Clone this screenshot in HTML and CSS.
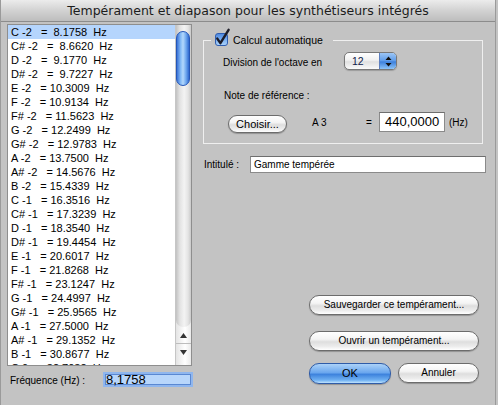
FILE: index.html
```html
<!DOCTYPE html>
<html lang="fr">
<head>
    <meta charset="UTF-8">
    <title>Tempérament et diapason</title>
    <link rel="stylesheet" href="styles.css">
</head>
<body>
<div class="window">
    <div class="titlebar">Tempérament et diapason pour les synthétiseurs intégrés</div>
    <div class="content">
        <div class="left">
            <div class="listbox">
                <div class="list">
                    <div class="row sel">C -2   =  8.1758  Hz</div>
                    <div class="row">C# -2   =  8.6620  Hz</div>
                    <div class="row">D -2   =  9.1770  Hz</div>
                    <div class="row">D# -2   =  9.7227  Hz</div>
                    <div class="row">E -2   = 10.3009  Hz</div>
                    <div class="row">F -2   = 10.9134  Hz</div>
                    <div class="row">F# -2   = 11.5623  Hz</div>
                    <div class="row">G -2   = 12.2499  Hz</div>
                    <div class="row">G# -2   = 12.9783  Hz</div>
                    <div class="row">A -2   = 13.7500  Hz</div>
                    <div class="row">A# -2   = 14.5676  Hz</div>
                    <div class="row">B -2   = 15.4339  Hz</div>
                    <div class="row">C -1   = 16.3516  Hz</div>
                    <div class="row">C# -1   = 17.3239  Hz</div>
                    <div class="row">D -1   = 18.3540  Hz</div>
                    <div class="row">D# -1   = 19.4454  Hz</div>
                    <div class="row">E -1   = 20.6017  Hz</div>
                    <div class="row">F -1   = 21.8268  Hz</div>
                    <div class="row">F# -1   = 23.1247  Hz</div>
                    <div class="row">G -1   = 24.4997  Hz</div>
                    <div class="row">G# -1   = 25.9565  Hz</div>
                    <div class="row">A -1   = 27.5000  Hz</div>
                    <div class="row">A# -1   = 29.1352  Hz</div>
                    <div class="row">B -1   = 30.8677  Hz</div>
                    <div class="row">C 0   = 32.7032  Hz</div>
                </div>
                <div class="scrollbar">
                    <div class="track"><div class="thumb"></div></div>
                    <div class="arrow">
                        <svg width="7" height="5" viewBox="0 0 7 5"><path d="M0 5 L3.5 0 L7 5 Z" fill="#333"/></svg>
                    </div>
                    <div class="arrow down">
                        <svg width="7" height="5" viewBox="0 0 7 5"><path d="M0 0 L3.5 5 L7 0 Z" fill="#333"/></svg>
                    </div>
                </div>
            </div>
            <div class="freq-row">
                <span class="freq-label">Fréquence (Hz) :</span>
                <span class="field focus">8,1758</span>
            </div>
        </div>

        <div class="right">
            <fieldset class="group">
                <legend>
                    <span class="check">
                        <svg class="tick" width="13" height="13" viewBox="0 0 13 13"><path d="M2.3 5.6 L5.4 10.2 L13.6 -3.2" fill="none" stroke="#1c1c28" stroke-width="2.4" stroke-linecap="round" stroke-linejoin="round"/></svg>
                    </span><span class="legend-text">Calcul automatique</span>
                </legend>
                <div class="gbody">
                    <div class="opt-row">
                        <span class="opt-label">Division de l'octave en</span>
                        <div class="popup">
                            <span class="popup-value">12</span>
                            <span class="popup-arrows">
                                <svg width="7" height="11" viewBox="0 0 7 11"><path d="M0.5 4 L3.5 0.5 L6.5 4 Z M0.5 7 L3.5 10.5 L6.5 7 Z" fill="#111"/></svg>
                            </span>
                        </div>
                    </div>
                    <div class="note-row">Note de référence :</div>
                    <div class="ref-row">
                        <span class="btn btn-choose">Choisir...</span>
                        <span class="ref-note">A 3</span>
                        <span class="ref-eq">=</span>
                        <span class="num-field">440,0000</span>
                        <span class="ref-unit">(Hz)</span>
                    </div>
                </div>
            </fieldset>

            <div class="name-row">
                <span class="name-label">Intitulé :</span>
                <span class="name-field">Gamme tempérée</span>
            </div>

            <div class="actions">
                <span class="btn btn-wide">Sauvegarder ce tempérament...</span>
                <span class="btn btn-wide btn-open">Ouvrir un tempérament...</span>
                <div class="btn-row">
                    <span class="btn btn-ok">OK</span>
                    <span class="btn btn-cancel">Annuler</span>
                </div>
            </div>
        </div>
    </div>
</div>
</body>
</html>
```

FILE: styles.css
```css
body {
    margin: 0;
    background-color: #c3c3c3;
    font-family: "Liberation Sans", Arial, sans-serif;
    font-size: 10px;
    color: #000;
}
.window {
    width: 496px;
    height: 405px;
    box-sizing: border-box;
    border-left: 1px solid #9a9a9a;
    border-right: 1px solid #9a9a9a;
    background-color: #c3c3c3;
    overflow: hidden;
}
.titlebar {
    height: 22px;
    box-sizing: border-box;
    border-bottom: 1px solid #8c8c8c;
    background: linear-gradient(#ececec, #d2d2d2 50%, #bdbdbd);
    font-family: "DejaVu Sans", sans-serif;
    font-size: 12.5px;
    line-height: 21px;
    text-align: center;
    color: #1c1c1c;
}
.content {
    display: flex;
    padding: 2px 0 0 6px;
}

/* liste des notes */
.left {
    width: 186px;
}
.listbox {
    display: flex;
    width: 185px;
    height: 342px;
    box-sizing: border-box;
    border: 1px solid #8e8e8e;
    background-color: #fff;
}
.list {
    width: 167px;
    overflow: hidden;
    font-size: 11px;
}
.row {
    height: 14px;
    line-height: 14px;
    padding-left: 3px;
    white-space: pre;
}
.sel {
    background-color: #b5d5fd;
}
.scrollbar {
    width: 16px;
    box-sizing: border-box;
    border-left: 1px solid #c6c6c6;
    background: linear-gradient(to right, #e4e4e4, #f8f8f8 45%, #fff 60%, #eaeaea);
}
.track {
    height: 302px;
    box-sizing: border-box;
    padding-top: 6px;
    border-radius: 0 0 7px 7px;
    background: linear-gradient(to right, #c2c2c2, #e2e2e2 25%, #f3f3f3 55%, #e4e4e4 80%, #c9c9c9);
}
.thumb {
    width: 14px;
    height: 55px;
    box-sizing: border-box;
    border: 1px solid #2557b8;
    border-radius: 7px;
    background: linear-gradient(to right, #3a72d6, #84baf5 30%, #b3d8fc 50%, #6fa8ef 75%, #2f68cf);
}
.arrow {
    height: 16px;
    display: flex;
    align-items: center;
    justify-content: center;
}
.arrow.down {
    border-top: 1px solid #bdbdbd;
}
.freq-row {
    display: flex;
    align-items: center;
    justify-content: space-between;
    margin-top: 6px;
}
.freq-label {
    padding: 2px 0 0 3px;
}
.field {
    width: 90px;
    height: 15px;
    box-sizing: border-box;
    font-size: 13px;
    line-height: 11px;
    padding-left: 1px;
}
.focus {
    border: 2px solid #8fb6ee;
    box-shadow: inset 0 0 0 1px #5a88d2;
    background-color: #b8d6fb;
}

/* partie droite */
.right {
    width: 283px;
    margin-left: 10px;
    display: flex;
    flex-direction: column;
}
.group {
    margin: 8px 0 0;
    padding: 0;
    width: 280px;
    min-width: 0;
    box-sizing: border-box;
    border: 1px solid #efefef;
}
.group legend {
    margin-left: 7px;
    padding: 0 10px 0 4px;
    height: 16px;
    line-height: 16px;
}
.check {
    display: inline-block;
    position: relative;
    width: 13px;
    height: 13px;
    box-sizing: border-box;
    margin-right: 5px;
    vertical-align: -2px;
    border: 1px solid #2f5db0;
    border-radius: 3px;
    background: linear-gradient(#4f8ae0, #79aef0 50%, #a9d1fa);
}
.tick {
    position: absolute;
    left: -1px;
    top: -1px;
    overflow: visible;
}
.legend-text {
    font-size: 10.5px;
}
.gbody {
    padding: 4px 0 10px 19px;
}
.opt-row {
    display: flex;
    align-items: center;
    height: 18px;
}
.opt-label {
    width: 121px;
    padding-top: 2px;
}
.popup {
    display: flex;
    width: 53px;
    height: 18px;
    box-sizing: border-box;
    border: 1px solid #787878;
    border-radius: 5px;
    overflow: hidden;
    background: linear-gradient(#fff, #f1f1f1 45%, #e0e0e0 55%, #fafafa);
    box-shadow: 0 1px 1px rgba(0, 0, 0, 0.2);
}
.popup-value {
    flex: 1;
    padding-left: 7px;
    line-height: 16px;
    font-size: 10.5px;
    color: #101a48;
}
.popup-arrows {
    width: 16px;
    display: flex;
    align-items: center;
    justify-content: center;
    border-left: 1px solid #5d7fbf;
    background: linear-gradient(#9cc6f6, #5d9be9 50%, #3b7fdc 55%, #8cc3f7);
}
.note-row {
    margin-top: 18px;
    line-height: 16px;
    padding-left: 1px;
}
.ref-row {
    display: flex;
    align-items: center;
    height: 22px;
    margin-top: 7px;
}
.btn {
    display: block;
    box-sizing: border-box;
    border: 1px solid #6c6c6c;
    border-radius: 10px;
    background: linear-gradient(#fff, #f4f4f4 40%, #dedede 55%, #ececec 80%, #fff);
    box-shadow: 0 1px 1px rgba(0, 0, 0, 0.25);
    text-align: center;
    white-space: nowrap;
}
.btn-choose {
    width: 59px;
    height: 18px;
    margin: 4px 0 0 5px;
    font-size: 11px;
    line-height: 16px;
}
.ref-note {
    width: 54px;
    margin-left: 25px;
}
.ref-eq {
    width: 13px;
}
.num-field {
    width: 66px;
    height: 20px;
    box-sizing: border-box;
    padding-left: 5px;
    border: 1px solid #8a8a8a;
    border-top-color: #6e6e6e;
    background-color: #fff;
    font-size: 13px;
    line-height: 18px;
}
.ref-unit {
    margin-left: 4px;
}
.name-row {
    display: flex;
    align-items: center;
    margin: 12px 0 0 1px;
}
.name-label {
    width: 46px;
}
.name-field {
    width: 236px;
    height: 17px;
    box-sizing: border-box;
    padding-left: 3px;
    border: 1px solid #8a8a8a;
    border-top-color: #6e6e6e;
    background-color: #fff;
    line-height: 15px;
}
.actions {
    align-self: flex-end;
    width: 170px;
    margin: 122px 7px 0 0;
}
.btn-wide {
    height: 20px;
    line-height: 18px;
}
.btn-open {
    margin-top: 16px;
}
.btn-row {
    display: flex;
    justify-content: space-between;
    margin-top: 12px;
}
.btn-ok {
    width: 82px;
    height: 21px;
    line-height: 19px;
    font-size: 11px;
    border-color: #2f5ca8;
    background: linear-gradient(#acd2f8, #6ba7ee 45%, #3e83dd 55%, #70b1f2 85%, #bfe3ff);
}
.btn-cancel {
    width: 81px;
    height: 20px;
    line-height: 18px;
}
```
